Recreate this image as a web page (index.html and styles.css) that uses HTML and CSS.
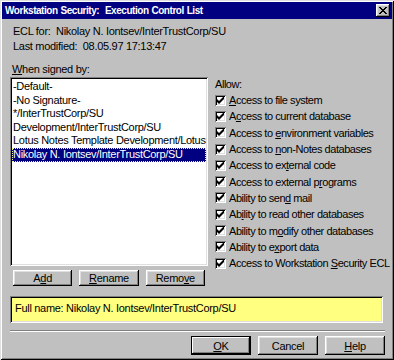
FILE: index.html
```html
<!DOCTYPE html>
<html lang="en">
<head>
    <meta charset="UTF-8" />
    <title>Workstation Security: Execution Control List</title>
    <link rel="stylesheet" href="styles.css">
</head>
<body>
<div class="window">
    <div class="titlebar">
        <span class="title">Workstation Security:&nbsp; Execution Control List</span>
        <span class="close">
            <svg width="8" height="7" viewBox="0 0 8 7">
                <path d="M0 0h2v1h1v1h2v-1h1v-1h2v1h-1v1h-1v1h-1v1h1v1h1v1h1v1h-2v-1h-1v-1h-2v1h-1v1h-2v-1h1v-1h1v-1h1v-1h-1v-1h-1v-1h-1z" fill="#000"/>
            </svg>
        </span>
    </div>
    <div class="content">
        <div class="info">
            <div>ECL for:&nbsp; Nikolay N. Iontsev/InterTrustCorp/SU</div>
            <div>Last modified:&nbsp; 08.05.97 17:13:47</div>
        </div>
        <div class="main">
            <div class="signers">
                <div class="label"><u>W</u>hen signed by:</div>
                <ul class="listbox">
                    <li>-Default-</li>
                    <li>-No Signature-</li>
                    <li>*/InterTrustCorp/SU</li>
                    <li>Development/InterTrustCorp/SU</li>
                    <li>Lotus Notes Template Development/Lotus Notes</li>
                    <li class="selected">Nikolay N. Iontsev/InterTrustCorp/SU</li>
                </ul>
                <div class="list-buttons">
                    <button class="btn">A<u>d</u>d</button>
                    <button class="btn"><u>R</u>ename</button>
                    <button class="btn">Remo<u>v</u>e</button>
                </div>
            </div>
            <div class="allow">
                <div class="allow-title">Allow:</div>
                <label class="check"><span class="box"></span><span><u>A</u>ccess to file system</span></label>
                <label class="check"><span class="box"></span><span>A<u>c</u>cess to current database</span></label>
                <label class="check"><span class="box"></span><span>Access to <u>e</u>nvironment variables</span></label>
                <label class="check"><span class="box"></span><span>Access to <u>n</u>on-Notes databases</span></label>
                <label class="check"><span class="box"></span><span>Access to ex<u>t</u>ernal code</span></label>
                <label class="check"><span class="box"></span><span>Access to external p<u>r</u>ograms</span></label>
                <label class="check"><span class="box"></span><span>Ability to sen<u>d</u> mail</span></label>
                <label class="check"><span class="box"></span><span>Ab<u>i</u>lity to read other databases</span></label>
                <label class="check"><span class="box"></span><span>Ability to m<u>o</u>dify other databases</span></label>
                <label class="check"><span class="box"></span><span>Ability to e<u>x</u>port data</span></label>
                <label class="check"><span class="box"></span><span>Access to Workstation <u>S</u>ecurity ECL</span></label>
            </div>
        </div>
        <div class="fullname">Full name: Nikolay N. Iontsev/InterTrustCorp/SU</div>
        <div class="separator"></div>
        <div class="dialog-buttons">
            <button class="btn default"><u>O</u>K</button>
            <button class="btn">Cancel</button>
            <button class="btn"><u>H</u>elp</button>
        </div>
    </div>
</div>
</body>
</html>
```

FILE: styles.css
```css
body {
    margin: 0;
    padding: 0;
    background-color: #c0c0c0;
    font-family: 'Liberation Sans', Arial, sans-serif;
    font-size: 11px;
    letter-spacing: -0.3px;
    color: #000;
}

.window {
    width: 394px;
    height: 360px;
    box-sizing: border-box;
    padding: 2px;
    background-color: #c0c0c0;
    box-shadow: inset 1px 1px #dfdfdf, inset -1px -1px #000, inset 2px 2px #fff, inset -2px -2px #808080;
    display: flex;
    flex-direction: column;
}

.titlebar {
    height: 17px;
    background-color: #000080;
    color: #fff;
    display: flex;
    align-items: center;
    justify-content: space-between;
    padding: 0 2px 0 3px;
}

.title {
    font-weight: bold;
    font-size: 10px;
    letter-spacing: -0.45px;
    word-spacing: 0.5px;
}

.close {
    width: 14px;
    height: 13px;
    box-sizing: border-box;
    background-color: #c0c0c0;
    box-shadow: inset -1px -1px #000, inset 1px 1px #fff, inset -2px -2px #808080, inset 2px 2px #dfdfdf;
    display: flex;
    align-items: center;
    justify-content: center;
    padding-bottom: 1px;
}

.content {
    flex: 1;
    padding: 5px 7px 0 8px;
    display: flex;
    flex-direction: column;
}

.info {
    padding-left: 3px;
    line-height: 15px;
}

.main {
    display: flex;
    margin-top: 8px;
    gap: 7px;
}

.signers {
    width: 198px;
}

.label {
    padding-left: 2px;
    line-height: 14px;
}

u {
    text-decoration: underline;
    text-underline-offset: 1px;
}

.listbox {
    list-style: none;
    margin: 1px 0 0 0;
    padding: 3px 2px;
    height: 189px;
    box-sizing: border-box;
    background-color: #fff;
    box-shadow: inset 1px 1px #808080, inset -1px -1px #fff, inset 2px 2px #000, inset -2px -2px #dfdfdf;
    overflow: hidden;
}

.listbox li {
    line-height: 13.6px;
    padding-left: 1px;
    white-space: nowrap;
    overflow: hidden;
}

.listbox li.selected {
    background-color: #000080;
    color: #fff;
    outline: 1px dotted #ffff80;
    outline-offset: -1px;
}

.list-buttons {
    display: flex;
    gap: 7px;
    padding: 4px 3px 0 3px;
}

.list-buttons .btn {
    width: 60px;
    height: 16px;
}

.btn {
    font-family: 'Liberation Sans', Arial, sans-serif;
    font-size: 11px;
    letter-spacing: -0.3px;
    color: #000;
    background-color: #c0c0c0;
    border: none;
    padding: 0;
    box-shadow: inset -1px -1px #000, inset 1px 1px #fff, inset -2px -2px #808080, inset 2px 2px #dfdfdf;
}

.btn.default {
    box-shadow: inset 0 0 0 1px #000, inset -2px -2px #000, inset 2px 2px #fff, inset -3px -3px #808080;
}

.allow {
    display: flex;
    flex-direction: column;
    padding-top: 15px;
    letter-spacing: -0.45px;
}

.allow-title {
    line-height: 14px;
    margin-bottom: 1px;
}

.check {
    display: flex;
    align-items: center;
    gap: 3px;
    height: 16.3px;
    white-space: nowrap;
}

.box {
    width: 11px;
    height: 11px;
    flex: none;
    box-sizing: border-box;
    background-color: #fff;
    box-shadow: inset 1px 1px #808080, inset -1px -1px #fff, inset 2px 2px #000, inset -2px -2px #dfdfdf;
    background-image: url("data:image/svg+xml,%3Csvg xmlns='http://www.w3.org/2000/svg' width='11' height='11'%3E%3Cpath d='M2 4v3l2 2 5-5v-3l-5 5z' fill='%23000'/%3E%3C/svg%3E");
}

.fullname {
    margin-top: 10px;
    height: 27px;
    box-sizing: border-box;
    padding: 6px 0 0 5px;
    background-color: #ffff80;
    box-shadow: inset 1px 1px #808080, inset -1px -1px #fff, inset 2px 2px #000, inset -2px -2px #dfdfdf;
    width: 373px;
}

.separator {
    margin-top: 7px;
    height: 0;
    border-top: 1px solid #808080;
    border-bottom: 1px solid #fff;
}

.dialog-buttons {
    display: flex;
    justify-content: flex-end;
    gap: 7px;
    margin-top: 4px;
}

.dialog-buttons .btn {
    width: 60px;
    height: 19px;
}
```
